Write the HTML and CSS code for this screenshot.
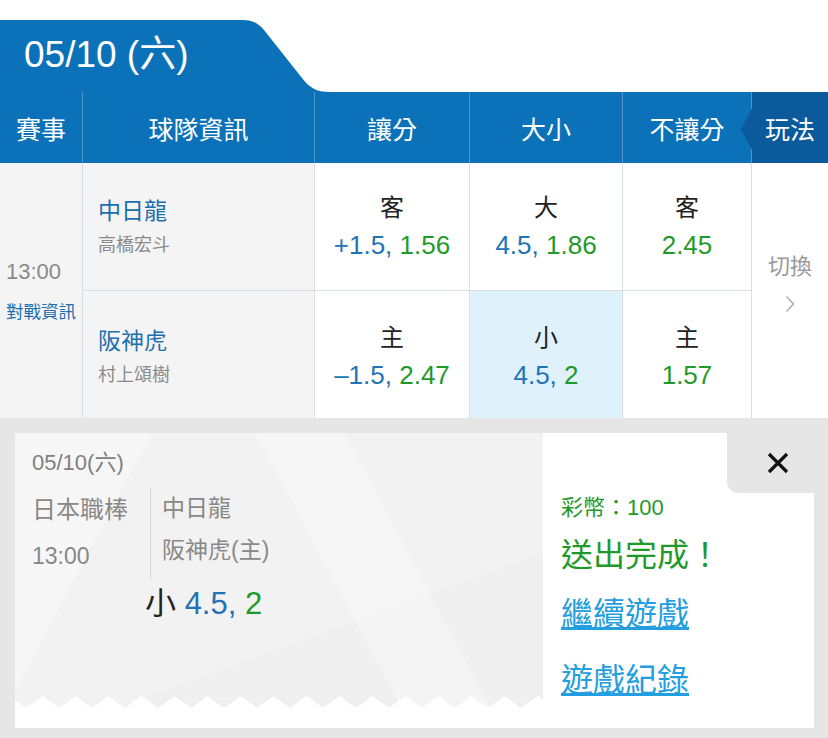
FILE: index.html
```html
<!DOCTYPE html>
<html lang="zh-Hant">
<head>
    <meta charset="UTF-8" />
    <title>投注</title>
    <link rel="stylesheet" href="styles.css">
</head>
<body>
    <header class="date-tab">
        <div class="date-label">05/10 (六)</div>
        <svg class="tab-curve" viewBox="0 0 90 72" width="90" height="72">
            <path d="M0 0 H3 C12 0 18 3 24 10 L62 58 C70 68 76 72 90 72 H0 Z" fill="#0b72ba" />
        </svg>
    </header>
    <main>
        <section class="board">
            <div class="head">賽事</div>
            <div class="head">球隊資訊</div>
            <div class="head">讓分</div>
            <div class="head">大小</div>
            <div class="head">不讓分</div>
            <div class="head play">玩法</div>

            <div class="match">
                <span class="match-time">13:00</span>
                <span class="match-link">對戰資訊</span>
            </div>

            <div class="team first">
                <span class="team-name">中日龍</span>
                <span class="team-pitcher">高橋宏斗</span>
            </div>
            <div class="odd first">
                <span class="odd-label">客</span>
                <span class="odd-value"><span class="blue">+1.5,</span> <span class="green">1.56</span></span>
            </div>
            <div class="odd first">
                <span class="odd-label">大</span>
                <span class="odd-value"><span class="blue">4.5,</span> <span class="green">1.86</span></span>
            </div>
            <div class="odd first">
                <span class="odd-label">客</span>
                <span class="odd-value"><span class="green">2.45</span></span>
            </div>

            <div class="switch">
                <span>切換</span>
                <svg width="10" height="18" viewBox="0 0 10 18">
                    <path d="M1.5 1.5 L8.5 9 L1.5 16.5" fill="none" stroke="#aaa" stroke-width="1.4" />
                </svg>
            </div>

            <div class="team">
                <span class="team-name">阪神虎</span>
                <span class="team-pitcher">村上頌樹</span>
            </div>
            <div class="odd">
                <span class="odd-label">主</span>
                <span class="odd-value"><span class="blue">–1.5,</span> <span class="green">2.47</span></span>
            </div>
            <div class="odd picked">
                <span class="odd-label">小</span>
                <span class="odd-value"><span class="blue">4.5,</span> <span class="green">2</span></span>
            </div>
            <div class="odd">
                <span class="odd-label">主</span>
                <span class="odd-value"><span class="green">1.57</span></span>
            </div>
        </section>

        <section class="result">
            <div class="ticket">
                <div class="ticket-info">
                    <p class="ticket-date">05/10(六)</p>
                    <div class="ticket-game">
                        <div class="game-meta">
                            <p>日本職棒</p>
                            <p>13:00</p>
                        </div>
                        <div class="game-teams">
                            <p>中日龍</p>
                            <p>阪神虎(主)</p>
                        </div>
                    </div>
                    <p class="ticket-pick">小 <span class="blue">4.5,</span> <span class="green">2</span></p>
                    <div class="zigzag"></div>
                </div>
                <div class="ticket-status">
                    <p class="coins">彩幣：100</p>
                    <p class="done">送出完成！</p>
                    <a class="status-link" href="#">繼續遊戲</a>
                    <a class="status-link" href="#">遊戲紀錄</a>
                </div>
                <button class="close" type="button">
                    <svg width="22" height="22" viewBox="0 0 22 22">
                        <path d="M2 2 L20 20 M20 2 L2 20" stroke="#111" stroke-width="3.2" />
                    </svg>
                </button>
            </div>
        </section>
    </main>
</body>
</html>
```

FILE: styles.css
```css
* {
    margin: 0;
    padding: 0;
    box-sizing: border-box;
}
body {
    width: 828px;
    height: 738px;
    overflow: hidden;
    padding-top: 20px;
    background-color: #fff;
    font-family: "Liberation Sans", "Noto Sans CJK TC", sans-serif;
    color: #222;
}
.blue {
    color: #2173b6;
}
.green {
    color: #1f9a2a;
}

/* date tab */
.date-tab {
    display: flex;
    height: 72px;
}
.date-label {
    width: 240px;
    padding-left: 24px;
    background-color: #0b72ba;
    color: #fff;
    font-size: 37px;
    line-height: 70px;
}
.tab-curve {
    display: block;
}

/* odds board */
.board {
    display: grid;
    grid-template-columns: 83px 232px 155px 153px 129px 76px;
    grid-template-rows: 71px 128px 127px;
}
.head {
    display: flex;
    align-items: center;
    justify-content: center;
    background-color: #0b72ba;
    color: #fff;
    font-size: 25px;
    border-right: 1px solid #4f95c9;
}
.head.play {
    position: relative;
    background-color: #0a5a9c;
    border-right: 0;
}
.head.play::before {
    content: "";
    position: absolute;
    left: -11px;
    top: 16px;
    border-right: 11px solid #0a5a9c;
    border-top: 21px solid transparent;
    border-bottom: 21px solid transparent;
}
.match {
    grid-row: 2 / span 2;
    display: flex;
    flex-direction: column;
    justify-content: center;
    gap: 14px;
    padding-left: 6px;
    background-color: #f4f4f4;
    border-right: 1px solid #d6dee6;
}
.match-time {
    font-size: 22px;
    line-height: 28px;
    color: #8a8a8a;
}
.match-link {
    font-size: 17.5px;
    line-height: 24px;
    color: #1b6fb0;
}
.team {
    display: flex;
    flex-direction: column;
    justify-content: center;
    gap: 6px;
    padding: 4px 0 0 15px;
    background-color: #f4f4f4;
    border-right: 1px solid #d6dee6;
}
.team-name {
    font-size: 23px;
    line-height: 30px;
    color: #1b6fb0;
}
.team-pitcher {
    font-size: 18px;
    line-height: 26px;
    color: #8a8a8a;
}
.first {
    border-bottom: 1px solid #d6dee6;
}
.team.first {
    padding-top: 0;
}
.odd {
    display: flex;
    flex-direction: column;
    align-items: center;
    justify-content: center;
    gap: 5px;
    padding-top: 3px;
    border-right: 1px solid #d6dee6;
}
.odd.first {
    padding-top: 0;
}
.odd.picked {
    background-color: #dff1fb;
}
.odd-label {
    font-size: 24px;
    line-height: 32px;
    color: #222;
}
.odd-value {
    font-size: 26px;
    line-height: 32px;
}
.switch {
    grid-column: 6;
    grid-row: 2 / span 2;
    display: flex;
    flex-direction: column;
    align-items: center;
    justify-content: center;
    gap: 13px;
    padding-bottom: 16px;
    font-size: 22px;
    line-height: 30px;
    color: #9a9a9a;
}

/* result panel */
.result {
    height: 320px;
    padding: 15px 14px 10px 15px;
    background-color: #e6e6e6;
}
.ticket {
    position: relative;
    display: flex;
    height: 295px;
    background-color: #fff;
}
.ticket-info {
    display: flex;
    flex-direction: column;
    width: 528px;
    padding: 18px 0 0 17px;
    background:
        linear-gradient(118deg, rgba(255, 255, 255, 0.35) 0 20%, transparent 20%),
        linear-gradient(62deg, transparent 58%, rgba(255, 255, 255, 0.3) 58% 71%, transparent 71%),
        linear-gradient(160deg, transparent 64%, rgba(0, 0, 0, 0.012) 64%),
        #f2f2f2;
}
.ticket-date {
    font-size: 22px;
    line-height: 24px;
    color: #808080;
}
.ticket-game {
    display: flex;
    margin-top: 13px;
    font-size: 23px;
    color: #888;
}
.game-meta {
    width: 118px;
    line-height: 46px;
    margin-top: -1px;
    font-size: 24px;
}
.game-meta p + p {
    font-size: 23px;
}
.game-teams {
    padding-left: 11px;
    border-left: 1px solid #d4d4d4;
    line-height: 41.5px;
}
.ticket-pick {
    margin-top: 6px;
    padding-left: 113px;
    font-size: 31px;
    line-height: 38px;
    color: #222;
}
.zigzag {
    margin: auto 0 0 -17px;
    height: 32px;
    background:
        conic-gradient(from 126deg at 50% 0, #fff 108deg, transparent 0) 11px 0 / 33px 12px repeat-x,
        linear-gradient(to bottom, transparent 11px, #fff 11px);
}
.ticket-status {
    display: flex;
    flex-direction: column;
    align-items: flex-start;
    padding: 60px 0 0 18px;
}
.coins {
    font-size: 22px;
    line-height: 30px;
    color: #1f9a2a;
}
.done {
    margin-top: 10px;
    font-size: 32px;
    line-height: 44px;
    color: #1f9a2a;
}
.status-link {
    margin-top: 17px;
    font-size: 32px;
    line-height: 40px;
    color: #239ee0;
}
.status-link + .status-link {
    margin-top: 26px;
}
.close {
    position: absolute;
    top: 0;
    right: 0;
    display: flex;
    align-items: center;
    width: 87px;
    height: 60px;
    padding-left: 40px;
    border: 0;
    border-bottom-left-radius: 12px;
    background-color: #e6e6e6;
}
.close svg {
    display: block;
}
```
